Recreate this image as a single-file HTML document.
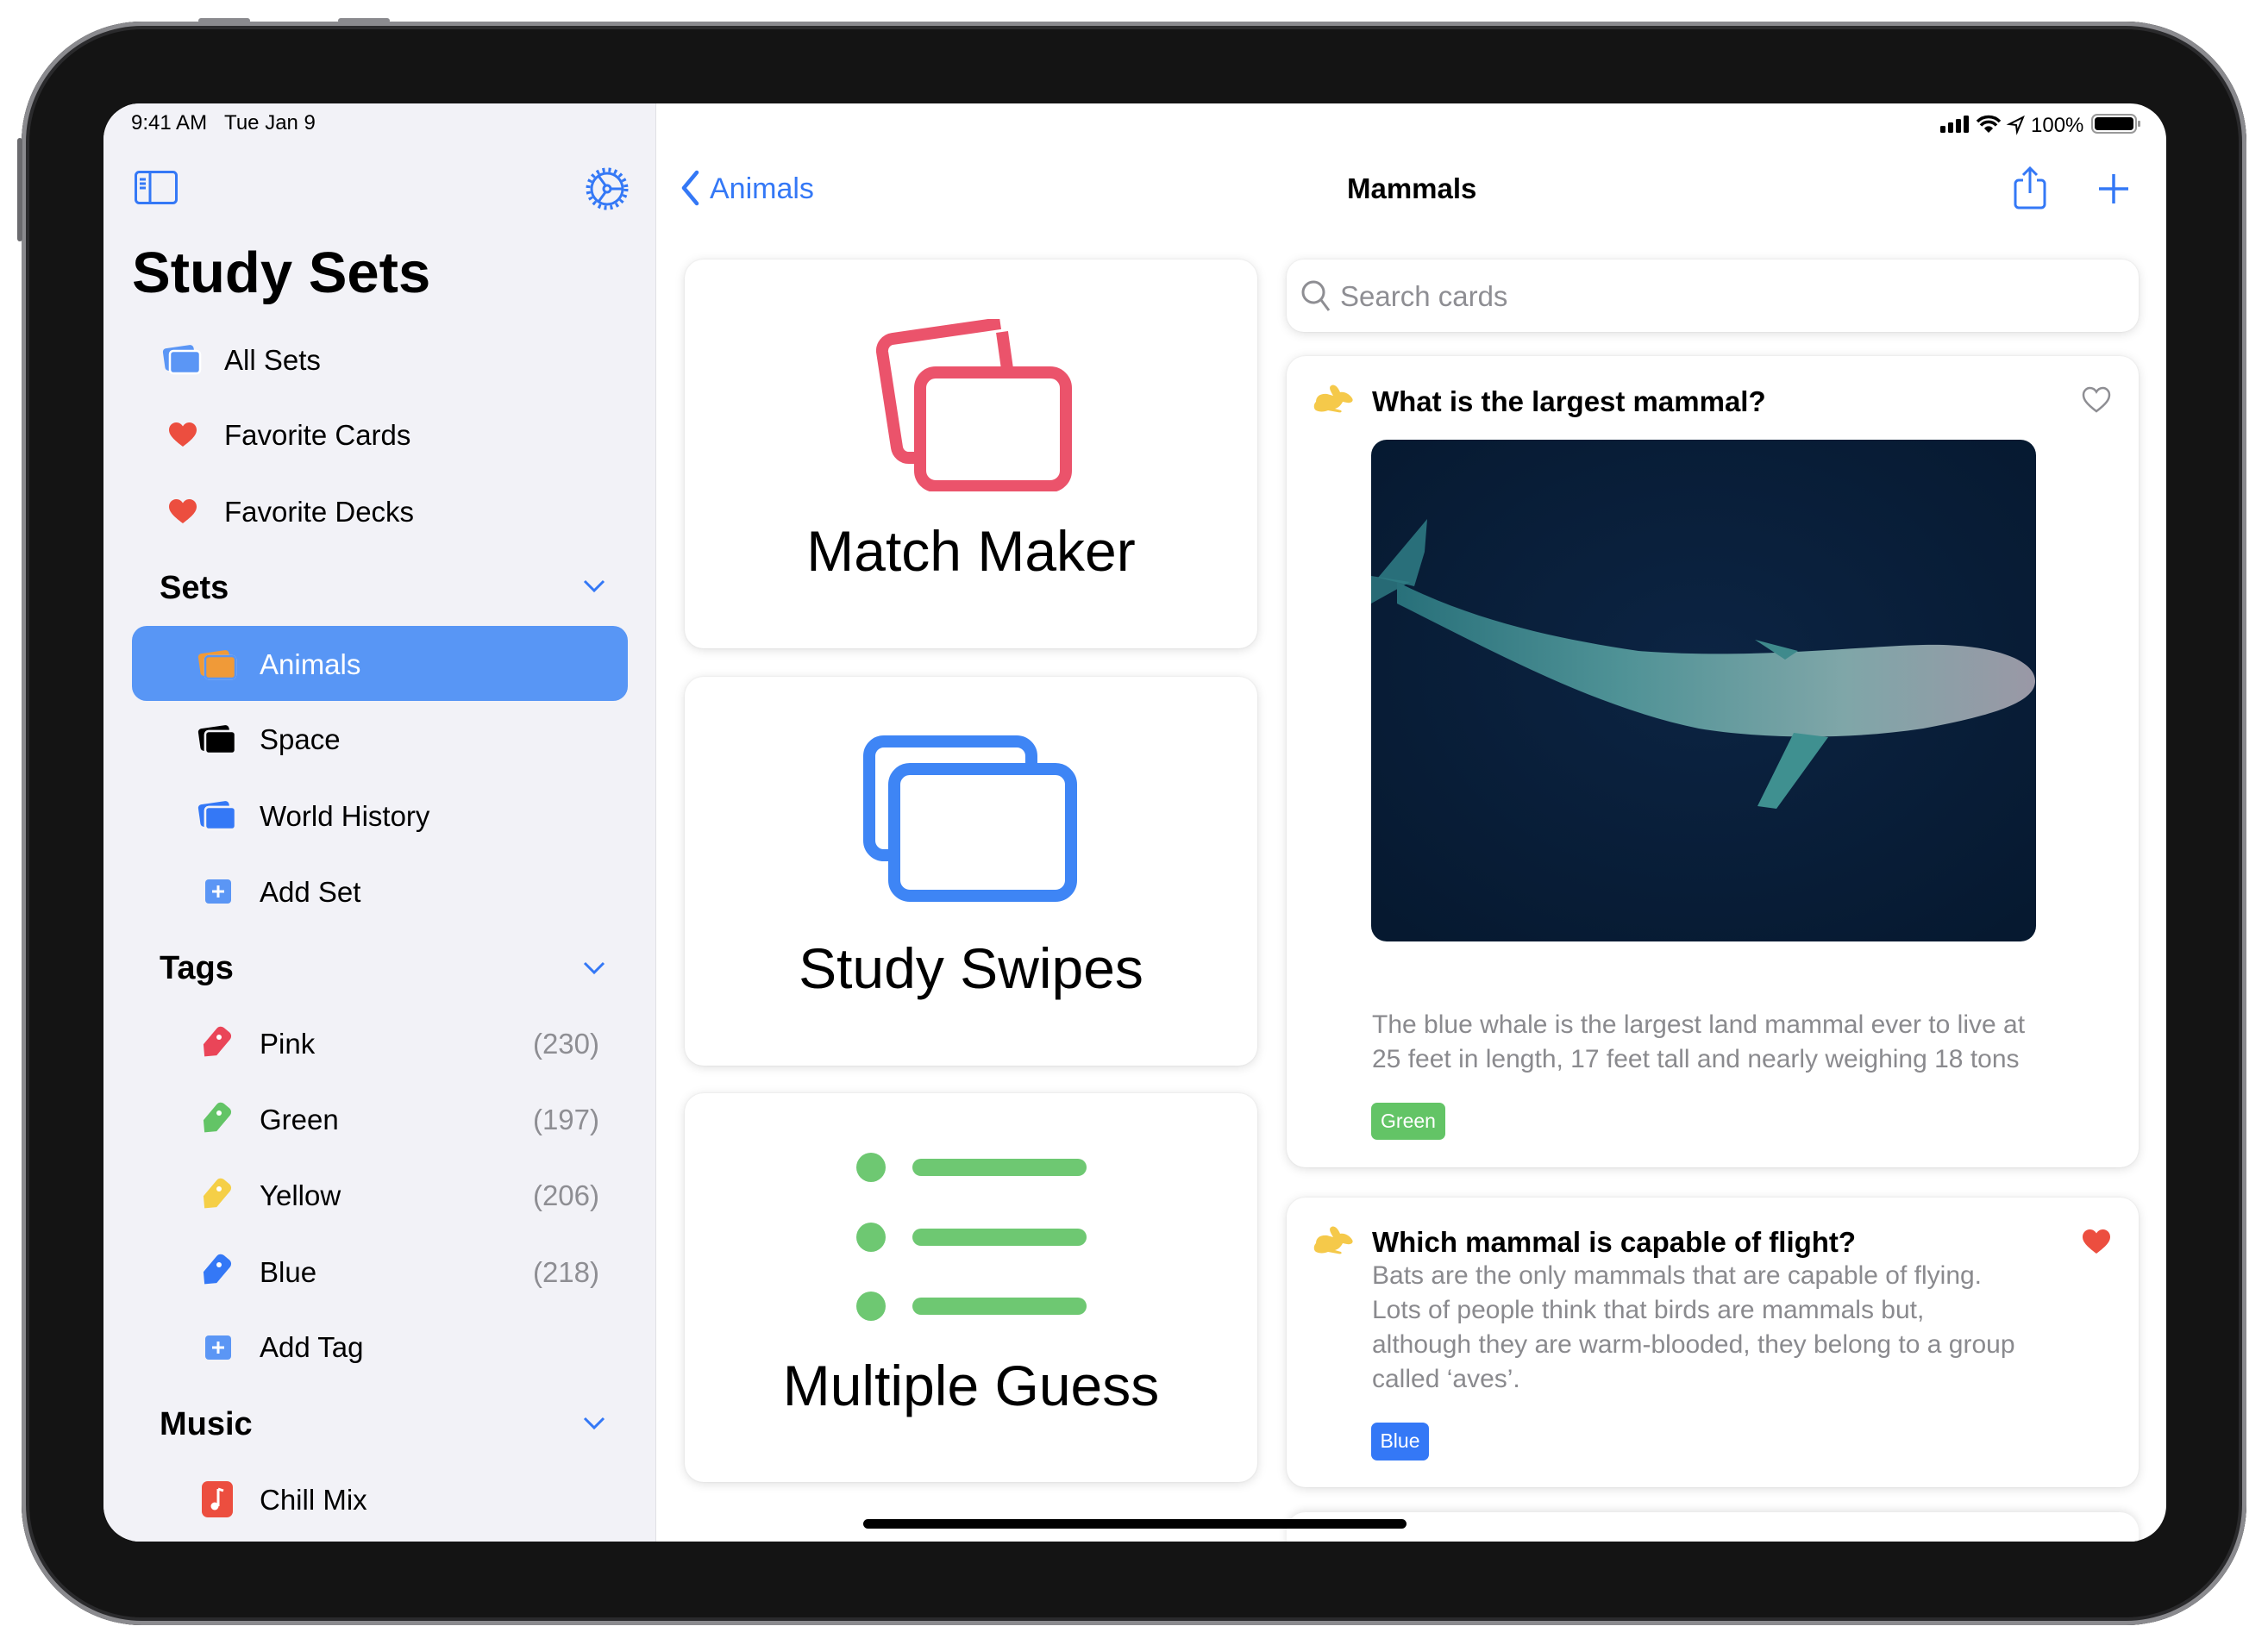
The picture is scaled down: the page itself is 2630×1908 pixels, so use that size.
<!DOCTYPE html>
<html><head><meta charset="utf-8">
<style>
*{margin:0;padding:0;box-sizing:border-box}
body{width:2630px;height:1908px;background:#fff;position:relative;overflow:hidden;font-family:"Liberation Sans",sans-serif;color:#000}
.a{position:absolute}
.t{position:absolute;white-space:nowrap;line-height:1}
.card{position:absolute;background:#fff;border-radius:22px;box-shadow:0 2px 12px rgba(0,0,0,.13),0 0 2px rgba(0,0,0,.08)}
.side{font-size:33px}
.cnt{font-size:33px;color:#8e8e93}
</style></head><body>
<!-- frame -->
<div class="a" style="left:25px;top:25px;width:2580px;height:1860px;border-radius:140px;background:#141414;box-shadow:inset 0 0 0 5px #8a8a8e,inset 0 0 0 9px #2a2a2c"></div>
<div class="a" style="left:230px;top:21px;width:60px;height:6px;background:#8a8a8e;border-radius:3px"></div>
<div class="a" style="left:392px;top:21px;width:60px;height:6px;background:#8a8a8e;border-radius:3px"></div>
<div class="a" style="left:20px;top:160px;width:6px;height:120px;background:#6a6a6e;border-radius:3px"></div>
<!-- screen -->
<div class="a" style="left:120px;top:120px;width:2392px;height:1668px;border-radius:42px;background:#fff;overflow:hidden">
  <div class="a" style="left:0;top:0;width:641px;height:1668px;background:#f2f2f7;border-right:1px solid #e0e0e5"></div>
  <div class="a" style="left:1372px;top:1634px;width:988px;height:80px;background:#fff;border-radius:22px;box-shadow:0 -2px 10px rgba(0,0,0,.12)"></div>
</div>
<!-- status bar -->
<div class="t" style="left:152px;top:131px;font-size:24px">9:41 AM&nbsp;&nbsp;&nbsp;Tue Jan 9</div>
<svg class="a" style="left:2248px;top:130px" width="240" height="28" viewBox="0 0 240 28">
 <rect x="2" y="16" width="6" height="8" rx="1.5"/><rect x="11" y="12" width="6" height="12" rx="1.5"/><rect x="20" y="8" width="6" height="16" rx="1.5"/><rect x="29" y="4" width="6" height="20" rx="1.5"/>
 <path d="M45 11 A18 18 0 0 1 71 11 M49 15.5 A12 12 0 0 1 67 15.5" stroke="#000" stroke-width="3.5" fill="none"/><path d="M53 19 A6 6 0 0 1 63 19 L58 24 Z"/>
 <path d="M82 14 L98 6 L91 23 L90 15 Z" fill="none" stroke="#000" stroke-width="2"/>
 <text x="107" y="23" font-family="Liberation Sans" font-size="24">100%</text>
 <rect x="178" y="3" width="51" height="21" rx="6" fill="none" stroke="#999" stroke-width="2"/><rect x="181" y="6" width="45" height="15" rx="3.5"/><rect x="231" y="10" width="3" height="7" rx="1" fill="#999"/>
</svg>
<!-- sidebar toolbar -->
<svg class="a" style="left:156px;top:198px" width="52" height="40" viewBox="0 0 52 40" fill="none" stroke="#3478f6" stroke-width="3"><rect x="1.5" y="1.5" width="47" height="36" rx="4"/><path d="M18 2 V38 M6 10h7 M6 15h7 M6 20h7"/></svg>
<svg class="a" style="left:679px;top:194px" width="50" height="50" viewBox="0 0 50 50" fill="none" stroke="#3478f6" stroke-width="3"><circle cx="25" cy="25" r="18"/><circle cx="25" cy="25" r="22" stroke-dasharray="3 4" stroke-width="5"/><circle cx="25" cy="25" r="4"/><path d="M29 25h14 M23 21 L15 10 M23 29 L15 40"/></svg>
<div class="t" style="left:153px;top:283px;font-size:67px;font-weight:bold">Study Sets</div>
<svg width="0" height="0" style="position:absolute"><defs>
<g id="stk"><rect x="2" y="5" width="36" height="26" rx="4" transform="rotate(-8 20 18)"/><rect x="9" y="10" width="35" height="26" rx="4" stroke="#fff" stroke-width="2.5"/></g>
<path id="hrt" d="M16 28 C4 19 0 14 0 8.5 C0 3.5 4 0 8.5 0 C12 0 14.5 2 16 4.5 C17.5 2 20 0 23.5 0 C28 0 32 3.5 32 8.5 C32 14 28 19 16 28Z"/>
<g id="tag"><path d="M14 0 H22 A6 6 0 0 1 28 6 V30 L18 40 L8 30 V6 A6 6 0 0 1 14 0Z" transform="rotate(40 18 20)"/></g>
<path id="rab" d="M4 22 C4 15 10 12 17 13 L24 15 C21 10 18 5 22 3 C26 1 30 6 32 11 C37 10 43 13 46 18 C48 21 45 24 40 23 L35 22 C33 26 30 29 26 30 L33 32 C35 34 32 35 29 34 L18 32 C13 34 8 34 4 32 C1 30 1 25 4 22 Z"/>
</defs></svg>
<svg class="a" style="left:188px;top:397px" width="48" height="40" fill="#5b96f5"><use href="#stk"/></svg>
<div class="t side" style="left:260px;top:401px">All Sets</div>
<svg class="a" style="left:196px;top:490px" width="32" height="28" fill="#ec4e3f"><use href="#hrt"/></svg>
<div class="t side" style="left:260px;top:488px">Favorite Cards</div>
<svg class="a" style="left:196px;top:579px" width="32" height="28" fill="#ec4e3f"><use href="#hrt"/></svg>
<div class="t side" style="left:260px;top:577px">Favorite Decks</div>
<div class="t" style="left:185px;top:663px;font-size:38px;font-weight:bold">Sets</div>
<svg class="a" style="left:676px;top:672px" width="26" height="16" fill="none" stroke="#3478f6" stroke-width="3"><path d="M2 2 L13 13 L24 2"/></svg>
<div class="a" style="left:153px;top:726px;width:575px;height:87px;border-radius:17px;background:#5896f5"></div>
<svg class="a" style="left:229px;top:751px" width="48" height="40" fill="#f09a38"><use href="#stk"/></svg>
<svg class="a" style="left:229px;top:751px" width="48" height="40"><rect x="9" y="10" width="35" height="26" rx="4" fill="#f09a38" stroke="#5896f5" stroke-width="2.5"/></svg>
<div class="t side" style="left:301px;top:754px;color:#fff">Animals</div>
<svg class="a" style="left:229px;top:838px" width="48" height="40" fill="#000"><use href="#stk"/></svg>
<svg class="a" style="left:229px;top:838px" width="48" height="40"><rect x="9" y="10" width="35" height="26" rx="4" fill="#000" stroke="#f2f2f7" stroke-width="2.5"/></svg>
<div class="t side" style="left:301px;top:841px">Space</div>
<svg class="a" style="left:229px;top:926px" width="48" height="40" fill="#3478f6"><use href="#stk"/></svg>
<svg class="a" style="left:229px;top:926px" width="48" height="40"><rect x="9" y="10" width="35" height="26" rx="4" fill="#3478f6" stroke="#f2f2f7" stroke-width="2.5"/></svg>
<div class="t side" style="left:301px;top:930px">World History</div>
<svg class="a" style="left:237px;top:1019px" width="32" height="30"><rect x="1" y="1" width="30" height="28" rx="4" fill="#5b96f5"/><path d="M16 8v14M9 15h14" stroke="#fff" stroke-width="3"/></svg>
<div class="t side" style="left:301px;top:1018px">Add Set</div>
<div class="t" style="left:185px;top:1104px;font-size:38px;font-weight:bold">Tags</div>
<svg class="a" style="left:676px;top:1115px" width="26" height="16" fill="none" stroke="#3478f6" stroke-width="3"><path d="M2 2 L13 13 L24 2"/></svg>
<svg class="a" style="left:232px;top:1190px" width="38" height="42" fill="#ea4558"><use href="#tag"/><circle cx="22" cy="13" r="3" fill="#fff"/></svg>
<div class="t side" style="left:301px;top:1194px">Pink</div><div class="t cnt" style="right:1935px;top:1194px">(230)</div>
<svg class="a" style="left:232px;top:1278px" width="38" height="42" fill="#63c466"><use href="#tag"/><circle cx="22" cy="13" r="3" fill="#fff"/></svg>
<div class="t side" style="left:301px;top:1282px">Green</div><div class="t cnt" style="right:1935px;top:1282px">(197)</div>
<svg class="a" style="left:232px;top:1366px" width="38" height="42" fill="#f5cf47"><use href="#tag"/><circle cx="22" cy="13" r="3" fill="#fff"/></svg>
<div class="t side" style="left:301px;top:1370px">Yellow</div><div class="t cnt" style="right:1935px;top:1370px">(206)</div>
<svg class="a" style="left:232px;top:1454px" width="38" height="42" fill="#3478f6"><use href="#tag"/><circle cx="22" cy="13" r="3" fill="#fff"/></svg>
<div class="t side" style="left:301px;top:1459px">Blue</div><div class="t cnt" style="right:1935px;top:1459px">(218)</div>
<svg class="a" style="left:237px;top:1548px" width="32" height="30"><rect x="1" y="1" width="30" height="28" rx="4" fill="#5b96f5"/><path d="M16 8v14M9 15h14" stroke="#fff" stroke-width="3"/></svg>
<div class="t side" style="left:301px;top:1546px">Add Tag</div>
<div class="t" style="left:185px;top:1633px;font-size:38px;font-weight:bold">Music</div>
<svg class="a" style="left:676px;top:1643px" width="26" height="16" fill="none" stroke="#3478f6" stroke-width="3"><path d="M2 2 L13 13 L24 2"/></svg>
<svg class="a" style="left:233px;top:1717px" width="38" height="44"><rect x="1" y="1" width="36" height="42" rx="7" fill="#ec4e3f"/><path d="M20 10 V30 M20 10 L26 12" stroke="#fff" stroke-width="3" fill="none"/><circle cx="16" cy="30" r="4.5" fill="#fff"/></svg>
<div class="t side" style="left:301px;top:1723px">Chill Mix</div>
<!-- main nav -->
<svg class="a" style="left:788px;top:197px" width="24" height="42" fill="none" stroke="#3478f6" stroke-width="4.5" stroke-linecap="round" stroke-linejoin="round"><path d="M20 3 L5 21 L20 39"/></svg>
<div class="t" style="left:823px;top:202px;font-size:34px;color:#3478f6">Animals</div>
<div class="t" style="left:1562px;top:202px;font-size:33px;font-weight:bold">Mammals</div>
<svg class="a" style="left:2333px;top:192px" width="42" height="52" fill="none" stroke="#3478f6" stroke-width="3"><path d="M13 17 H8 A4 4 0 0 0 4 21 V45 A4 4 0 0 0 8 49 H34 A4 4 0 0 0 38 45 V21 A4 4 0 0 0 34 17 H29 M21 3 V32 M13 11 L21 3 L29 11"/></svg>
<svg class="a" style="left:2432px;top:200px" width="38" height="38" stroke="#3478f6" stroke-width="3.5"><path d="M19 2V36M2 19H36"/></svg>
<!-- left cards -->
<div class="card" style="left:794px;top:301px;width:664px;height:451px"></div>
<svg class="a" style="left:1010px;top:370px" width="240" height="200" fill="none" stroke="#eb536b" stroke-width="14" stroke-linejoin="round">
 <path d="M56 151 H44 A14 14 0 0 1 30 139 L13 28 A14 14 0 0 1 25 13 L150 -5" transform="translate(0,10)"/>
 <path d="M152 5 L158 48" transform="translate(0,10)"/>
 <rect x="57" y="62" width="169" height="132" rx="18"/>
</svg>
<div class="t" style="left:794px;top:606px;width:664px;text-align:center;font-size:66px">Match Maker</div>
<div class="card" style="left:794px;top:785px;width:664px;height:451px"></div>
<svg class="a" style="left:1000px;top:850px" width="252" height="205" fill="none" stroke="#3e85f5" stroke-width="14" stroke-linejoin="round">
 <path d="M37 142 H25 A17 17 0 0 1 8 125 V27 A17 17 0 0 1 25 10 H179 A17 17 0 0 1 196 27 V42"/>
 <rect x="37" y="42" width="205" height="147" rx="18"/>
</svg>
<div class="t" style="left:794px;top:1090px;width:664px;text-align:center;font-size:66px">Study Swipes</div>
<div class="card" style="left:794px;top:1268px;width:664px;height:451px"></div>
<svg class="a" style="left:992px;top:1336px" width="272" height="200" fill="#6ec872">
 <circle cx="18" cy="18" r="17"/><rect x="66" y="8" width="202" height="20" rx="10"/>
 <circle cx="18" cy="99" r="17"/><rect x="66" y="89" width="202" height="20" rx="10"/>
 <circle cx="18" cy="179" r="17"/><rect x="66" y="169" width="202" height="20" rx="10"/>
</svg>
<div class="t" style="left:794px;top:1574px;width:664px;text-align:center;font-size:66px">Multiple Guess</div>
<!-- search -->
<div class="card" style="left:1492px;top:301px;width:988px;height:84px;border-radius:20px"></div>
<svg class="a" style="left:1508px;top:324px" width="36" height="40" fill="none" stroke="#8e8e93" stroke-width="3"><circle cx="15" cy="15" r="12"/><path d="M24 24 L33 36"/></svg>
<div class="t" style="left:1554px;top:327px;font-size:33px;color:#8e8e93">Search cards</div>
<!-- card 1 -->
<div class="card" style="left:1492px;top:413px;width:988px;height:941px"></div>
<svg class="a" style="left:1522px;top:444px" width="50" height="36" fill="#f5c94a"><use href="#rab"/></svg>
<div class="t" style="left:1591px;top:449px;font-size:33px;font-weight:bold">What is the largest mammal?</div>
<svg class="a" style="left:2414px;top:448px" width="34" height="32" fill="none" stroke="#8e8e93" stroke-width="2.5"><path d="M17 29 C5 20 2 15 2 10 C2 5.5 5.5 2 9.5 2 C13 2 15.5 4 17 6.5 C18.5 4 21 2 24.5 2 C28.5 2 32 5.5 32 10 C32 15 29 20 17 29Z"/></svg>
<svg class="a" style="left:1590px;top:510px" width="771" height="582" viewBox="0 0 771 582">
 <defs>
  <radialGradient id="sea" cx="50%" cy="45%" r="70%"><stop offset="0" stop-color="#0c2443"/><stop offset="1" stop-color="#061930"/></radialGradient>
  <linearGradient id="wh" x1="0" y1="0" x2="1" y2="0"><stop offset="0" stop-color="#28707a"/><stop offset=".35" stop-color="#4f9296"/><stop offset=".7" stop-color="#7fa6a8"/><stop offset="1" stop-color="#9a98a6"/></linearGradient>
  <clipPath id="cl"><rect width="771" height="582" rx="18"/></clipPath>
 </defs>
 <g clip-path="url(#cl)">
 <rect width="771" height="582" fill="url(#sea)"/>
 <path d="M8 160 L65 92 L62 130 L50 170 Z" fill="#2f7e86" opacity=".85"/>
 <path d="M0 158 L45 165 L0 190 Z" fill="#2f7e86" opacity=".8"/>
 <path d="M30 165 C120 210 210 230 310 245 C440 255 560 240 640 238 C720 236 770 255 770 280 C770 305 720 320 640 335 C540 350 440 345 380 335 C260 310 150 250 30 190 Z" fill="url(#wh)"/>
 <path d="M490 340 L448 425 L470 428 L530 345 Z" fill="#3f9090"/>
 <path d="M445 232 L495 245 L480 255 Z" fill="#3f8a8c"/>
 </g>
</svg>
<div class="t" style="left:1591px;top:1174px;font-size:30px;color:#8a8a8e">The blue whale is the largest land mammal ever to live at</div>
<div class="t" style="left:1591px;top:1214px;font-size:30px;color:#8a8a8e">25 feet in length, 17 feet tall and nearly weighing 18 tons</div>
<div class="a" style="left:1590px;top:1279px;width:86px;height:43px;border-radius:7px;background:#63c466"></div>
<div class="t" style="left:1590px;top:1289px;width:86px;text-align:center;font-size:23px;color:#fff">Green</div>
<!-- card 2 -->
<div class="card" style="left:1492px;top:1389px;width:988px;height:336px"></div>
<svg class="a" style="left:1522px;top:1420px" width="50" height="36" fill="#f5c94a"><use href="#rab"/></svg>
<div class="t" style="left:1591px;top:1424px;font-size:33px;font-weight:bold">Which mammal is capable of flight?</div>
<svg class="a" style="left:2415px;top:1426px" width="34" height="30" fill="#ec4e3f"><use href="#hrt"/></svg>
<div class="t" style="left:1591px;top:1465px;font-size:30px;color:#8a8a8e">Bats are the only mammals that are capable of flying.</div>
<div class="t" style="left:1591px;top:1505px;font-size:30px;color:#8a8a8e">Lots of people think that birds are mammals but,</div>
<div class="t" style="left:1591px;top:1545px;font-size:30px;color:#8a8a8e">although they are warm-blooded, they belong to a group</div>
<div class="t" style="left:1591px;top:1585px;font-size:30px;color:#8a8a8e">called ‘aves’.</div>
<div class="a" style="left:1590px;top:1650px;width:67px;height:44px;border-radius:7px;background:#3478f6"></div>
<div class="t" style="left:1590px;top:1660px;width:67px;text-align:center;font-size:23px;color:#fff">Blue</div>
<!-- home indicator -->
<div class="a" style="left:1001px;top:1762px;width:630px;height:11px;border-radius:6px;background:#000"></div>
</body></html>
